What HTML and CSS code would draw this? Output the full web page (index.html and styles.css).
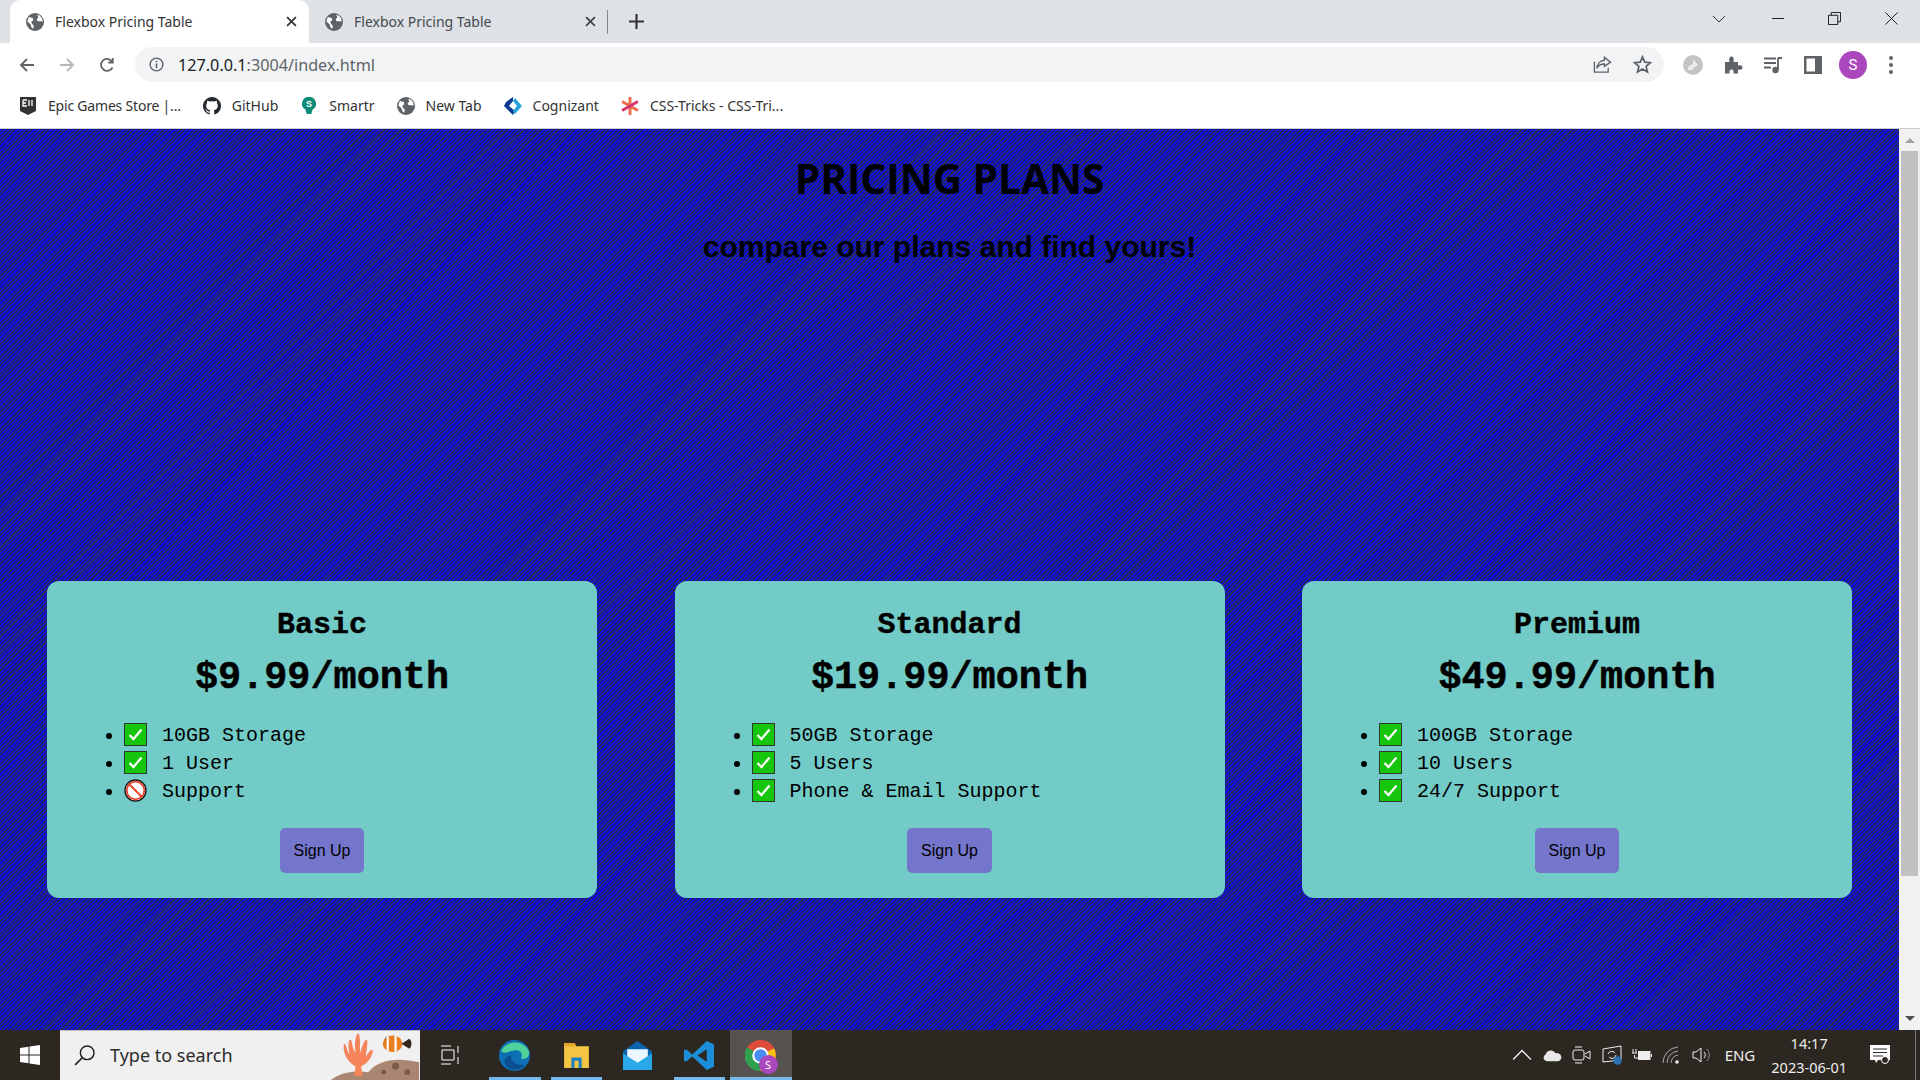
FILE: index.html
```html
<!DOCTYPE html>
<html lang="en">
<head>
  <meta charset="UTF-8">
  <title>Flexbox Pricing Table</title>
  <link rel="stylesheet" href="styles.css">
</head>
<body>

  <svg class="defs" width="0" height="0">
    <symbol id="globe" viewBox="0 0 16 16">
      <circle cx="8" cy="8" r="8" fill="#5f6368"/>
      <path d="M2.500 3.500 6 4.500 6.500 6.500 4.500 8 6 10.500 7 11 6.500 14 5 13 4 10 1.200 7.500ZM10 1.500 11 4 9.500 5.500 10 7 14.800 7.500 14.500 5 12.500 2.500Z" fill="#fff"/>
    </symbol>
    <symbol id="check" viewBox="0 0 23 23">
      <rect x=".5" y=".5" width="22" height="22" fill="#16c60c" stroke="#2a3a30"/>
      <path d="M5.500 12 9.500 16 17.500 6.500" fill="none" stroke="#fff" stroke-width="2.200"/>
    </symbol>
    <symbol id="ban" viewBox="0 0 23 23">
      <circle cx="11.500" cy="11.500" r="10.500" fill="#fff" stroke="#1c1c1c" stroke-width="1.400"/>
      <circle cx="11.500" cy="11.500" r="8.800" fill="none" stroke="#e8432a" stroke-width="1.800"/>
      <path d="M5.500 5.500 17.500 17.500" stroke="#e8432a" stroke-width="2"/>
    </symbol>
  </svg>

  <div class="tabstrip">
    <div class="tab tab-active">
      <svg class="favicon"><use href="#globe"/></svg>
      <span class="tab-title">Flexbox Pricing Table</span>
      <svg class="tab-close" viewBox="0 0 10 10"><path d="M1 1 9 9M9 1 1 9" stroke="#333" stroke-width="1.600"/></svg>
    </div>
    <div class="tab">
      <svg class="favicon"><use href="#globe"/></svg>
      <span class="tab-title">Flexbox Pricing Table</span>
      <svg class="tab-close" viewBox="0 0 10 10"><path d="M1 1 9 9M9 1 1 9" stroke="#444" stroke-width="1.600"/></svg>
    </div>
    <div class="tab-sep"></div>
    <svg class="new-tab" viewBox="0 0 14 14"><path d="M7 0V14M0 7H14" stroke="#333" stroke-width="2"/></svg>
    <div class="window-controls">
      <svg viewBox="0 0 14 8" class="win-chevron"><path d="M1 1 7 7 13 1" fill="none" stroke="#333"/></svg>
      <svg viewBox="0 0 14 14" class="win-btn"><path d="M1 7H14" stroke="#111" stroke-width="1"/></svg>
      <svg viewBox="0 0 14 14" class="win-btn"><path d="M.5 3.500H10.500V13.500H.5ZM3.500 3.500V.5H13.500V10.500H10.500" fill="none" stroke="#111"/></svg>
      <svg viewBox="0 0 14 14" class="win-btn"><path d="M.5.5 13.500 13.500M13.500.5 .5 13.500" stroke="#111"/></svg>
    </div>
  </div>

  <div class="toolbar">
    <svg class="nav-icon" viewBox="0 0 16 16"><path d="M15 8H2M8 2 2 8 8 14" fill="none" stroke="#5f6368" stroke-width="1.800"/></svg>
    <svg class="nav-icon" viewBox="0 0 16 16"><path d="M1 8H14M8 2 14 8 8 14" fill="none" stroke="#b4b7ba" stroke-width="1.800"/></svg>
    <svg class="nav-icon" viewBox="0 0 16 16"><path d="M13.500 10.500A6 6 0 1 1 13 4.500M13.800 1V5.500H9.300" fill="none" stroke="#5f6368" stroke-width="1.800"/></svg>
    <div class="omnibox">
      <svg class="info-icon" viewBox="0 0 16 16"><circle cx="8" cy="8" r="6.800" fill="none" stroke="#5f6368" stroke-width="1.500"/><path d="M8 7V12M8 4V5.600" stroke="#5f6368" stroke-width="1.700"/></svg>
      <span class="url"><span class="url-host">127.0.0.1</span>:3004/index.html</span>
      <svg class="omni-icon share-icon" viewBox="0 0 20 20"><path d="M12 2.500 18.500 7.500 12 12V9.500C8 9.500 5.500 11 4 14 4.500 9.500 7.500 5.800 12 5.500ZM1.500 7V18H16V13.500" fill="none" stroke="#5f6368" stroke-width="1.400"/></svg>
      <svg class="omni-icon star-icon" viewBox="0 0 20 20"><path d="M10 2 12.400 7.500 18.300 8.100 13.800 12 15.200 17.900 10 14.800 4.800 17.900 6.200 12 1.700 8.100 7.600 7.500Z" fill="none" stroke="#5f6368" stroke-width="1.800"/></svg>
    </div>
    <div class="toolbar-actions">
      <svg class="action-icon" viewBox="0 0 20 20"><circle cx="10" cy="10" r="10" fill="#c4c4c4"/><path d="M10 4 15 10 10 13ZM5 12 10 9V15L5 15Z" fill="#ececec"/></svg>
      <svg class="action-icon" viewBox="0 0 20 20"><path d="M2 7H6.500C5.500 3 7 1.500 8.500 1.500S11.500 3 10.500 7H15V10.500C18.500 9.800 19.500 11 19.500 12.500S18.500 15.200 15 14.500V18.500H10.500C11 15.500 10 14.500 8.500 14.500S6 15.500 6.500 18.500H2Z" fill="#5f6368"/></svg>
      <svg class="action-icon" viewBox="0 0 20 20"><path d="M1 3.500H13M1 8H13M1 12.500H8" stroke="#5f6368" stroke-width="1.800"/><path d="M15 3V15M15 3H19" fill="none" stroke="#5f6368" stroke-width="1.800"/><circle cx="12.500" cy="15" r="3.200" fill="#5f6368"/></svg>
      <svg class="action-icon" viewBox="0 0 20 20"><rect x="1" y="1" width="18" height="18" fill="#5f6368"/><rect x="3.500" y="3.500" width="8.500" height="13" fill="#fff"/></svg>
      <div class="avatar">S</div>
      <svg class="action-icon dots-icon" viewBox="0 0 6 20"><circle cx="3" cy="3" r="2" fill="#5f6368"/><circle cx="3" cy="10" r="2" fill="#5f6368"/><circle cx="3" cy="17" r="2" fill="#5f6368"/></svg>
    </div>
  </div>

  <div class="bookmarks">
    <div class="bookmark">
      <svg class="favicon" viewBox="0 0 16 18"><path d="M0 0H16V14L8 18 0 14Z" fill="#333"/><path d="M3 3H7M3 3V9H7M3 6H6M9 3V9M12 3V9" stroke="#fff" stroke-width="1.300" fill="none"/></svg>
      <span class="bookmark-tight">Epic Games Store |...</span>
    </div>
    <div class="bookmark">
      <svg class="favicon" viewBox="0 0 16 16"><path d="M8 0a8 8 0 0 0-2.500 15.600c.4.100.5-.2.500-.4v-1.400c-2.200.5-2.700-1-2.700-1-.4-.9-.9-1.200-.9-1.200-.7-.5.100-.5.100-.5.800.1 1.200.8 1.200.8.700 1.200 1.900.9 2.300.7.100-.5.300-.9.500-1.100-1.800-.2-3.600-.9-3.600-4 0-.9.300-1.600.8-2.100-.1-.2-.4-1 .1-2.100 0 0 .7-.2 2.200.8a7.600 7.600 0 0 1 4 0c1.500-1 2.200-.8 2.200-.8.400 1.100.2 1.900.1 2.100.5.600.8 1.300.8 2.100 0 3.100-1.900 3.800-3.700 4 .3.300.6.800.6 1.500v2.200c0 .2.100.5.500.4A8 8 0 0 0 8 0Z" fill="#24292f"/></svg>
      <span>GitHub</span>
    </div>
    <div class="bookmark">
      <svg class="favicon" viewBox="0 0 16 20"><path d="M8 0A7.500 7.500 0 0 1 12 14L10.500 19H5.500L4 14A7.500 7.500 0 0 1 8 0Z" fill="#0d8a78"/><text x="8" y="11" class="smartr-s">S</text></svg>
      <span>Smartr</span>
    </div>
    <div class="bookmark">
      <svg class="favicon"><use href="#globe"/></svg>
      <span>New Tab</span>
    </div>
    <div class="bookmark">
      <svg class="favicon" viewBox="0 0 18 18"><path d="M9 0 2 5 0 9 9 18 11 14 5 9 9 4Z" fill="#0b3a93"/><path d="M9 4 13 9 9 14 11 17 18 9 11 1Z" fill="#27a3dd"/></svg>
      <span>Cognizant</span>
    </div>
    <div class="bookmark">
      <svg class="favicon" viewBox="0 0 16 16"><path d="M8 0V16M1 4 15 12" stroke="#ee6c4d" stroke-width="2.600"/><path d="M15 4 1 12" stroke="#d6336c" stroke-width="2.600"/></svg>
      <span>CSS-Tricks - CSS-Tri...</span>
    </div>
  </div>

  <div class="viewport">
    <main class="page">
      <h1>PRICING PLANS</h1>
      <h2>compare our plans and find yours!</h2>

      <div class="plans">
        <section class="plan">
          <h3>Basic</h3>
          <p class="price">$9.99/month</p>
          <ul>
            <li><svg class="mark"><use href="#check"/></svg>10GB Storage</li>
            <li><svg class="mark"><use href="#check"/></svg>1 User</li>
            <li><svg class="mark"><use href="#ban"/></svg>Support</li>
          </ul>
          <button>Sign Up</button>
        </section>
        <section class="plan">
          <h3>Standard</h3>
          <p class="price">$19.99/month</p>
          <ul>
            <li><svg class="mark"><use href="#check"/></svg>50GB Storage</li>
            <li><svg class="mark"><use href="#check"/></svg>5 Users</li>
            <li><svg class="mark"><use href="#check"/></svg>Phone &amp; Email Support</li>
          </ul>
          <button>Sign Up</button>
        </section>
        <section class="plan">
          <h3>Premium</h3>
          <p class="price">$49.99/month</p>
          <ul>
            <li><svg class="mark"><use href="#check"/></svg>100GB Storage</li>
            <li><svg class="mark"><use href="#check"/></svg>10 Users</li>
            <li><svg class="mark"><use href="#check"/></svg>24/7 Support</li>
          </ul>
          <button>Sign Up</button>
        </section>
      </div>
    </main>

    <div class="scrollbar">
      <div class="arrow-up"></div>
      <div class="thumb"></div>
      <div class="arrow-down"></div>
    </div>
  </div>

  <div class="taskbar">
    <svg class="start" viewBox="0 0 20 20"><path d="M0 3 8.500 1.800V9.500H0ZM9.500 1.600 20 0V9.500H9.500ZM0 10.500H8.500V18.200L0 17ZM9.500 10.500H20V20L9.500 18.400Z" fill="#fff"/></svg>
    <div class="search">
      <svg class="search-icon" viewBox="0 0 20 20"><circle cx="12" cy="8" r="6.200" fill="none" stroke="#222" stroke-width="1.300"/><path d="M7.500 12.500 1 19" stroke="#222" stroke-width="1.500"/></svg>
      <span>Type to search</span>
      <svg class="search-art" viewBox="0 0 90 50">
        <path d="M0 50C10 42 24 40 38 42 48 30 66 26 90 32V50Z" fill="#a98671"/>
        <circle cx="66" cy="36" r="3.500" fill="#7b5a47"/><circle cx="54" cy="42" r="2.500" fill="#7b5a47"/><circle cx="78" cy="42" r="3" fill="#7b5a47"/>
        <path d="M24 46 25 36C18 32 12 24 13 14 15 10 16 20 19 24 17 14 18 6 21 10 22 16 23 20 25 22 24 12 25 4 28 2 31 8 29 16 30 22 32 16 34 8 37 9 38 16 35 24 36 26 38 22 41 18 43 20 42 28 36 34 31 36L32 46Z" fill="#f7855c"/>
        <ellipse cx="63" cy="13" rx="10" ry="8.500" fill="#e9801f"/>
        <path d="M58 5.500V20.500M66 5V21" stroke="#fff" stroke-width="2.200"/>
        <path d="M53 13C55 9 55 7 57 5M72 13 80 8C83 10 83 16 80 18Z" fill="#33261c"/>
      </svg>
    </div>
    <svg class="task-view" viewBox="0 0 20 20"><path d="M0 1H10M0 19H10M1 5H13V15H1ZM17 1V8M17 12V19" fill="none" stroke="#fff"/></svg>
    <div class="task-apps">
      <div class="app app-open">
        <svg viewBox="0 0 30 30"><circle cx="15" cy="15" r="15" fill="#0f6fb5"/><path d="M2 11C6 0 24-1 29 11 30 17 25 19 21 18 24 13 20 9 15 10 9 11 6 14 2 11Z" fill="#4fd39c"/><path d="M12 17C12 22 18 25 25 24 20 31 6 30 5 20 7 15 12 14 12 17Z" fill="#0a4f8f"/></svg>
      </div>
      <div class="app app-open">
        <svg viewBox="0 0 30 30"><path d="M3 3H13L15 6H27V27H3Z" fill="#f4c542"/><path d="M3 3H13L15 6H3Z" fill="#e0a526"/><path d="M10 27V17H20V27H17V20H13V27Z" fill="#1d80c4"/></svg>
      </div>
      <div class="app">
        <svg viewBox="0 0 30 30"><path d="M1 11 15 1 29 11V29H1Z" fill="#0a64ad"/><path d="M5 9H25V18L15 24 5 18Z" fill="#e9f6fd"/><path d="M1 13 15 22 29 13V29H1Z" fill="#29a9e8"/></svg>
      </div>
      <div class="app app-open">
        <svg viewBox="0 0 30 30"><path d="M22 1 29 4V26L22 29 8 16 2 21 0 20V10L2 9 8 14ZM22 9 13 15 22 21Z" fill="#1a8ed8"/></svg>
      </div>
      <div class="app app-open app-current">
        <svg viewBox="0 0 30 30"><circle cx="15" cy="15" r="15" fill="#dd4b3a"/><path d="M15 15 2 7A15 15 0 0 0 15 30Z" fill="#2fa04f"/><path d="M15 15 28 8A15 15 0 0 1 15 30Z" fill="#f4c20d"/><circle cx="15" cy="15" r="7" fill="#4a8cf0" stroke="#fff" stroke-width="2"/></svg>
        <div class="app-badge">S</div>
      </div>
    </div>
    <div class="tray">
      <svg class="tray-icon" viewBox="0 0 18 10"><path d="M1 9 9 1 17 9" fill="none" stroke="#eee" stroke-width="1.300"/></svg>
      <svg class="tray-icon" viewBox="0 0 22 14"><path d="M5 14A4 4 0 0 1 4 6.500 6 6 0 0 1 15 5 4.500 4.500 0 0 1 18 14Z" fill="#e8e8e8"/></svg>
      <svg class="tray-icon" viewBox="0 0 20 20"><rect x="1" y="5" width="11" height="10" rx="2" fill="none" stroke="#eee"/><path d="M13 9 18 6V14L13 11M3 2H10M3 18H10" fill="none" stroke="#eee"/></svg>
      <svg class="tray-icon" viewBox="0 0 20 20"><path d="M1 4 19 1V15L1 17Z" fill="none" stroke="#eee"/><path d="M6 9A4 4 0 0 1 13 8M14 10A4 4 0 0 1 7 12" fill="none" stroke="#eee"/><circle cx="15.500" cy="15.500" r="4.200" fill="#2a72b5"/></svg>
      <svg class="tray-icon" viewBox="0 0 20 14"><path d="M1 1V5M4 1V5M0 5H5M2.500 7V10H6" fill="none" stroke="#eee"/><rect x="6" y="3" width="12.500" height="9" fill="#eee"/><path d="M19.500 6V9" stroke="#eee"/></svg>
      <svg class="tray-icon" viewBox="0 0 20 20"><path d="M1 18A16 16 0 0 1 16 2M5 18A12 12 0 0 1 16 6M9 18A8 8 0 0 1 16 10" fill="none" stroke="#aaa"/><circle cx="15" cy="17" r="1.800" fill="#eee"/></svg>
      <svg class="tray-icon" viewBox="0 0 20 20"><path d="M1 7H4L9 3V17L4 13H1Z" fill="none" stroke="#eee"/><path d="M12 7A4 4 0 0 1 12 13" fill="none" stroke="#eee"/><path d="M15 4A9 9 0 0 1 15 16" fill="none" stroke="#888"/></svg>
      <span class="lang">ENG</span>
      <div class="clock">
        <span>14:17</span>
        <span>2023-06-01</span>
      </div>
      <svg class="notify" viewBox="0 0 20 20"><path d="M0 0H20V15H8L6 18 5 15H0Z" fill="#fff"/><path d="M3 4H17M3 7.500H17M3 11H13" stroke="#2d2722"/><circle cx="15" cy="15" r="3.500" fill="#2d2722" stroke="#fff"/></svg>
      <div class="show-desktop"></div>
    </div>
  </div>

</body>
</html>
```

FILE: styles.css
```css
* {
  box-sizing: border-box;
}

html, body {
  margin: 0;
  padding: 0;
  height: 100%;
  overflow: hidden;
}

body {
  display: flex;
  flex-direction: column;
  font-family: 'Noto Sans', 'Open Sans', sans-serif;
  background-color: white;
}

.defs {
  position: absolute;
}

/* browser window */
.tabstrip {
  display: flex;
  align-items: center;
  height: 43px;
  flex-shrink: 0;
  padding-left: 10px;
  background-color: #dee1e6;
}

.tab {
  display: flex;
  align-items: center;
  width: 299px;
  height: 43px;
  padding: 0 12px 0 16px;
  color: #45494d;
  font-size: 14px;
}

.tab-active {
  background-color: white;
  border-radius: 10px 10px 0 0;
  color: #333;
}

.favicon {
  width: 18px;
  height: 18px;
  flex-shrink: 0;
}

.tab-title {
  flex: 1;
  margin-left: 11px;
}

.tab-close {
  width: 11px;
  height: 11px;
}

.tab-sep {
  width: 1px;
  height: 24px;
  margin-left: -1px;
  background-color: #85888c;
}

.new-tab {
  width: 15px;
  height: 15px;
  margin-left: 21px;
}

.window-controls {
  display: flex;
  align-items: center;
  gap: 44px;
  margin-left: auto;
  padding-right: 22px;
  margin-top: -6px;
}

.win-chevron {
  width: 14px;
  height: 8px;
  margin-right: 1px;
}

.win-btn {
  width: 13px;
  height: 13px;
}

.toolbar {
  display: flex;
  align-items: center;
  height: 43px;
  flex-shrink: 0;
  padding-left: 19px;
  gap: 24px;
}

.nav-icon {
  width: 16px;
  height: 16px;
}

.omnibox {
  display: flex;
  align-items: center;
  width: 1529px;
  height: 35px;
  margin-left: -4px;
  padding: 0 12px 0 14px;
  border-radius: 18px;
  background-color: #f1f3f4;
  color: #5f6368;
  font-size: 16.200px;
}

.info-icon {
  width: 15px;
  height: 15px;
  margin-right: 14px;
}

.url-host {
  color: #202124;
}

.omni-icon {
  width: 19px;
  height: 19px;
}

.share-icon {
  margin-left: auto;
}

.star-icon {
  margin-left: 21px;
}

.toolbar-actions {
  display: flex;
  align-items: center;
  gap: 20px;
  margin-left: -5px;
}

.action-icon {
  width: 20px;
  height: 20px;
}

.avatar {
  width: 28px;
  height: 28px;
  margin-left: -4px;
  border-radius: 50%;
  background-color: #ab47bc;
  color: white;
  font-family: 'Roboto', sans-serif;
  font-size: 15px;
  line-height: 28px;
  text-align: center;
}

.dots-icon {
  width: 6px;
  margin-left: 1px;
}

.bookmarks {
  display: flex;
  align-items: center;
  gap: 22px;
  height: 43px;
  flex-shrink: 0;
  padding: 0 0 3px 19px;
  border-bottom: 1px solid #c9cbce;
  color: #333;
  font-size: 14px;
}

.bookmark {
  display: flex;
  align-items: center;
  gap: 11px;
}

.bookmark-tight {
  letter-spacing: -0.2px;
}

.smartr-s {
  fill: white;
  font-family: 'Liberation Sans', sans-serif;
  font-size: 10px;
  font-weight: bold;
  text-anchor: middle;
}

/* the page itself */
.viewport {
  display: flex;
  flex: 1;
  min-height: 0;
}

.page {
  flex: 1;
  padding-top: 24px;
  background-color: #15159a;
  background-image:
    repeating-linear-gradient(135deg, rgba(0, 0, 255, 0.15) 0, rgba(0, 0, 255, 0.15) 6px, rgba(40, 40, 70, 0.15) 6px, rgba(40, 40, 70, 0.15) 12px),
    repeating-linear-gradient(135deg, #0a0ae4 0, #0a0ae4 1.500px, #2c2c60 1.500px, #2c2c60 3px);
  text-align: center;
}

h1 {
  margin: 0;
  font-family: 'Open Sans', 'Noto Sans', sans-serif;
  font-size: 40.600px;
  font-weight: 700;
  line-height: 52px;
  color: black;
}

h2 {
  margin: 21px 0 0;
  font-family: 'Liberation Sans', Arial, sans-serif;
  font-size: 30px;
  font-weight: bold;
  line-height: 41px;
  color: black;
}

.plans {
  display: flex;
  justify-content: space-between;
  margin-top: 314px;
  padding: 0 47px;
}

.plan {
  width: 550px;
  padding: 27px 37px 25px;
  border-radius: 12px;
  background-color: #72cbc7;
  font-family: 'Liberation Mono', 'Courier New', monospace;
  color: black;
}

h3 {
  margin: 0;
  font-size: 30px;
  font-weight: bold;
  line-height: 34px;
  -webkit-text-stroke: 0.4px black;
}

.price {
  margin: 14px 0 0;
  font-size: 38.500px;
  font-weight: bold;
  line-height: 44px;
  -webkit-text-stroke: 0.5px black;
}

ul {
  margin: 22px 0 0;
  padding-left: 40px;
  text-align: left;
  font-size: 20px;
  line-height: 28px;
}

.mark {
  width: 23px;
  height: 23px;
  margin-right: 15px;
  vertical-align: -5px;
}

button {
  height: 45px;
  margin-top: 22px;
  padding: 0 14px;
  border: none;
  border-radius: 5px;
  background-color: #7476cc;
  color: black;
  font-family: 'Liberation Sans', Arial, sans-serif;
  font-size: 16px;
}

.scrollbar {
  display: flex;
  flex-direction: column;
  align-items: center;
  width: 21px;
  flex-shrink: 0;
  padding-top: 9px;
  background-color: #f1f1f1;
}

.arrow-up {
  width: 0;
  height: 0;
  border-left: 5px solid transparent;
  border-right: 5px solid transparent;
  border-bottom: 5px solid #a3a3a3;
}

.thumb {
  width: 17px;
  height: 725px;
  margin-top: 8px;
  background-color: #c1c1c1;
}

.arrow-down {
  width: 0;
  height: 0;
  margin-top: auto;
  margin-bottom: 9px;
  border-left: 5px solid transparent;
  border-right: 5px solid transparent;
  border-top: 5px solid #505050;
}

/* windows taskbar */
.taskbar {
  display: flex;
  align-items: center;
  height: 50px;
  flex-shrink: 0;
  padding-left: 20px;
  background-color: #2d2722;
  color: #eee;
}

.start {
  width: 20px;
  height: 20px;
}

.search {
  display: flex;
  align-items: center;
  width: 360px;
  height: 50px;
  margin-left: 20px;
  padding: 0 0 2px 14px;
  background-color: #f0f0f0;
  border-top: 1px solid #bbb;
  color: #2b2b2b;
  font-size: 18px;
}

.search-icon {
  width: 22px;
  height: 22px;
  margin-right: 14px;
}

.search-art {
  width: 90px;
  height: 49px;
  margin-left: auto;
  margin-bottom: -2px;
}

.task-view {
  width: 20px;
  height: 20px;
  margin-left: 21px;
}

.task-apps {
  display: flex;
  margin-left: 23px;
}

.app {
  position: relative;
  display: flex;
  align-items: center;
  justify-content: center;
  width: 61.500px;
  height: 50px;
}

.app svg {
  width: 31px;
  height: 31px;
}

.app-open::after {
  content: '';
  position: absolute;
  left: 5px;
  right: 5px;
  bottom: 0;
  height: 3px;
  background-color: #76b9ed;
}

.app-current {
  background-color: #555250;
}

.app-current::after {
  left: 0;
  right: 0;
}

.app-badge {
  position: absolute;
  right: 14px;
  bottom: 6px;
  width: 19px;
  height: 19px;
  border-radius: 50%;
  background-color: #ab47bc;
  color: white;
  font-size: 11px;
  line-height: 19px;
  text-align: center;
}

.tray {
  display: flex;
  align-items: center;
  margin-left: auto;
  height: 50px;
  gap: 10px;
  font-size: 14.500px;
}

.tray-icon {
  width: 20px;
  height: 20px;
}

.lang {
  margin-left: 3px;
  font-size: 15px;
}

.clock {
  display: flex;
  flex-direction: column;
  align-items: center;
  gap: 4px;
  margin-left: 6px;
  line-height: 20px;
}

.notify {
  width: 20px;
  height: 20px;
  margin-left: 13px;
}

.show-desktop {
  width: 1px;
  height: 50px;
  margin-left: 15px;
  margin-right: 4px;
  background-color: #777;
}
```
